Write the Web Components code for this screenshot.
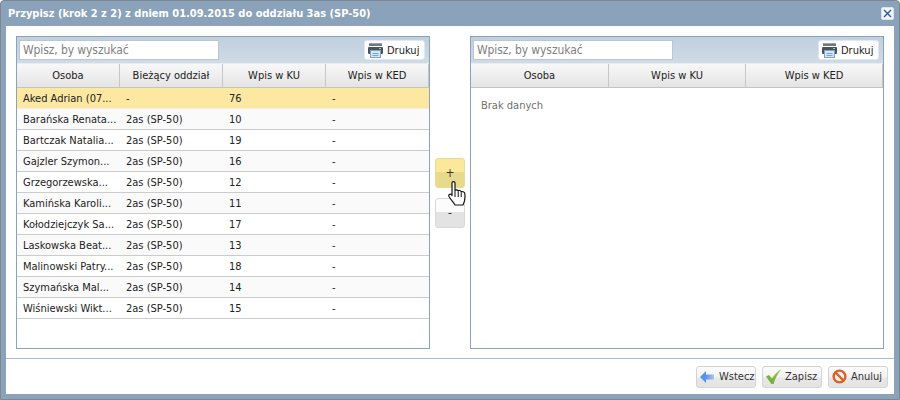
<!DOCTYPE html>
<html lang="pl">
<head>
<meta charset="utf-8">
<title>Przypisz</title>
<style>
    html, body { margin: 0; padding: 0; }
    body { width: 900px; height: 400px; overflow: hidden; font: 11px "DejaVu Sans", sans-serif; font-stretch: condensed; color: #222; }
</style>
</head>
<body>
<assign-dialog title-text="Przypisz (krok 2 z 2) z dniem 01.09.2015 do oddziału 3as (SP-50)"></assign-dialog>

<script>
const ICONS = {
    print: `<svg width="15" height="15" viewBox="0 0 15 15">
        <rect x="1" y="0" width="13" height="1" fill="#9aa2aa"/>
        <rect x="1" y="1" width="13" height="2" fill="#6d7780"/>
        <rect x="0" y="4" width="15" height="7" rx="1" fill="#49535c"/>
        <rect x="11" y="5" width="2" height="1" fill="#8fd0a0"/>
        <rect x="2.500" y="7.500" width="10" height="7" fill="#d6e6f5" stroke="#7fa3c8"/>
        <path d="M4.500 10.500h6M4.500 12.500h6" stroke="#7fa3c8"/>
    </svg>`,
    back: `<svg width="14" height="12" viewBox="0 0 14 12">
        <defs><linearGradient id="arrow"><stop offset="0.4" stop-color="#5a92e8"/><stop offset="1" stop-color="#a9c6ec"/></linearGradient></defs>
        <path d="M0 6 6 0v3.500h8v5H6V12z" fill="url(#arrow)"/>
    </svg>`,
    check: `<svg width="16" height="15" viewBox="0 0 16 15">
        <defs><linearGradient id="tick" x1="0" y1="1" x2="1" y2="0"><stop offset="0" stop-color="#6aa52c"/><stop offset="1" stop-color="#a6cf58"/></linearGradient></defs>
        <path d="M0 7.500 3 6 6 9.500C8 6 11 2.500 15.500 0 12 4.500 9 9.500 7.500 15H5.500z" fill="url(#tick)"/>
    </svg>`,
    cancel: `<svg width="15" height="15" viewBox="0 0 15 15">
        <circle cx="7.500" cy="7.500" r="5.900" fill="#fbeee6" stroke="#d9622b" stroke-width="2.400"/>
        <path d="M3.500 3.500 11.500 11.500" stroke="#d9622b" stroke-width="2.400"/>
    </svg>`
};

class DialogCloseButton extends HTMLElement {
    constructor() {
        super();
        this.attachShadow({ mode: 'open' });
    }

    connectedCallback() {
        this.shadowRoot.innerHTML = `
            <style>
                :host { display: block; box-sizing: border-box; width: 13px; height: 13px; background: #f1f6fb; border: 1px solid #d6e4f2; border-radius: 2px; }
                svg { display: block; }
            </style>
            <svg width="11" height="11" viewBox="0 0 11 11">
                <path d="M2 2 9 9M9 2 2 9" stroke="#2b5a90" stroke-width="1.400" fill="none"/>
            </svg>
        `;
    }
}

class SearchBox extends HTMLElement {
    constructor() {
        super();
        this.attachShadow({ mode: 'open' });
    }

    connectedCallback() {
        this.shadowRoot.innerHTML = `
            <style>
                :host { display: block; box-sizing: border-box; width: 200px; height: 20px; background: #fff; border: 1px solid #bcc6d0; color: #808080; font-size: 12px; letter-spacing: -.1px; line-height: 18px; padding-left: 3px; }
            </style>
            Wpisz, by wyszukać
        `;
    }
}

class PrintButton extends HTMLElement {
    constructor() {
        super();
        this.attachShadow({ mode: 'open' });
    }

    connectedCallback() {
        this.shadowRoot.innerHTML = `
            <style>
                :host { display: flex; align-items: center; gap: 4px; box-sizing: border-box; width: 61px; height: 20px; padding-left: 3px; background: #fff; border: 1px solid #e2e8ee; border-radius: 3px; color: #222; }
                svg { display: block; flex: none; }
            </style>
            ${ICONS.print}<span>Drukuj</span>
        `;
    }
}

class DataPanel extends HTMLElement {
    constructor() {
        super();
        this.attachShadow({ mode: 'open' });
    }

    connectedCallback() {
        const columns = JSON.parse(this.getAttribute('columns'));
        const rows = JSON.parse(this.getAttribute('rows') || '[]');
        const grid = `grid-template-columns: ${this.getAttribute('grid')};`;

        const head = columns.map(c => `<div class="th">${c}</div>`).join('');
        const body = rows.length
            ? rows.map((r, i) => `<div class="tr ${i === 0 ? 'selected' : ''}" style="${grid}">
                    ${r.map(c => `<div class="td">${c}</div>`).join('')}
                </div>`).join('')
            : `<div class="empty">Brak danych</div>`;

        this.shadowRoot.innerHTML = `
            <style>
                :host { display: flex; flex-direction: column; box-sizing: border-box; width: 414px; height: 313px; border: 1px solid #8aa3bb; background: #fff; }
                .toolbar { display: flex; justify-content: space-between; align-items: center; box-sizing: border-box; height: 27px; padding: 0 4px 0 2px; background: linear-gradient(#c0d0df, #cfdbe6); border-bottom: 1px solid #e8edf2; flex: none; }
                .head { display: grid; height: 24px; box-sizing: border-box; flex: none; background: linear-gradient(#f8f8f8, #e4e4e4); border-bottom: 1px solid #c4c4c4; }
                .th { display: flex; align-items: center; justify-content: center; border-right: 1px solid #c4c8cc; color: #222; }
                .tr { display: grid; height: 21px; box-sizing: border-box; border-bottom: 1px solid #ccc; background: #fff; }
                .tr:nth-child(even) { background: #fafafa; }
                .tr.selected { background: #fde8a2; border-bottom-color: #f4efdc; }
                .td { padding-left: 6px; line-height: 21px; white-space: nowrap; overflow: hidden; color: #222; }
                .empty { padding: 11px 10px; color: #707070; line-height: 14px; }
            </style>
            <div class="toolbar"><search-box></search-box><print-button></print-button></div>
            <div class="head" style="${grid}">${head}</div>
            <div class="body">${body}</div>
        `;
    }
}

class MoveButton extends HTMLElement {
    constructor() {
        super();
        this.attachShadow({ mode: 'open' });
    }

    connectedCallback() {
        const hot = this.hasAttribute('hot');
        this.shadowRoot.innerHTML = `
            <style>
                :host { display: flex; align-items: center; justify-content: center; box-sizing: border-box; width: 30px; height: 30px; border-radius: 3px; color: #333; font-size: 12px;
                    border: 1px solid ${hot ? '#e8dc90' : '#d8d8d8'};
                    background: ${hot ? 'linear-gradient(#fde79b 0 45%, #e8da8c 45% 100%)' : 'linear-gradient(#fcfcfc 0 45%, #e3e3e3 45% 100%)'}; }
            </style>
            <slot></slot>
        `;
    }
}

class FooterButton extends HTMLElement {
    constructor() {
        super();
        this.attachShadow({ mode: 'open' });
    }

    connectedCallback() {
        const icon = ICONS[this.getAttribute('icon')];
        this.shadowRoot.innerHTML = `
            <style>
                :host { display: flex; align-items: center; gap: 3px; box-sizing: border-box; width: 60px; height: 22px; padding-left: 3px; border: 1px solid #d4d4d4; border-radius: 3px; background: linear-gradient(#fcfcfc, #f3f3f3 50%, #e7e7e7 55%, #e4e4e4); color: #333; }
                .icon { display: flex; align-items: center; width: 16px; flex: none; }
                svg { display: block; }
            </style>
            <span class="icon">${icon}</span><slot></slot>
        `;
    }
}

class AssignDialog extends HTMLElement {
    constructor() {
        super();
        this.attachShadow({ mode: 'open' });
    }

    connectedCallback() {
        const leftRows = [
            ['Aked Adrian (07...', '-', '76', '-'],
            ['Barańska Renata...', '2as (SP-50)', '10', '-'],
            ['Bartczak Natalia...', '2as (SP-50)', '19', '-'],
            ['Gajzler Szymon...', '2as (SP-50)', '16', '-'],
            ['Grzegorzewska...', '2as (SP-50)', '12', '-'],
            ['Kamińska Karoli...', '2as (SP-50)', '11', '-'],
            ['Kołodziejczyk Sa...', '2as (SP-50)', '17', '-'],
            ['Laskowska Beat...', '2as (SP-50)', '13', '-'],
            ['Malinowski Patry...', '2as (SP-50)', '18', '-'],
            ['Szymańska Mal...', '2as (SP-50)', '14', '-'],
            ['Wiśniewski Wikt...', '2as (SP-50)', '15', '-']
        ];
        const attr = v => JSON.stringify(v).replace(/'/g, '&#39;');

        this.shadowRoot.innerHTML = `
            <style>
                :host { display: flex; flex-direction: column; box-sizing: border-box; width: 900px; height: 400px; background: #8aa3bb; border: 1px solid #7c8791; border-radius: 4px 4px 0 0; }
                .title { display: flex; align-items: center; justify-content: space-between; box-sizing: border-box; height: 25px; flex: none; padding: 0 5px 0 7px; color: #fff; font-weight: bold; font-size: 11px; }
                .content { flex: 1; display: flex; flex-direction: column; margin: 0 5px 5px 5px; background: #fff; }
                .main { display: flex; height: 333px; box-sizing: border-box; padding: 10px 9px 0 10px; border-bottom: 1px solid #a9bbcc; flex: none; }
                .moves { display: flex; flex-direction: column; gap: 10px; width: 40px; box-sizing: border-box; padding: 122px 0 0 5px; }
                .footer { flex: 1; display: flex; justify-content: flex-end; align-items: center; gap: 6px; padding-right: 6px; }
                .hand { position: absolute; left: 448px; top: 181px; }
            </style>
            <div class="title"><span>${this.getAttribute('title-text')}</span><dialog-close-button></dialog-close-button></div>
            <div class="content">
                <div class="main">
                    <data-panel grid="103px 103px 103px 1fr" columns='${attr(['Osoba', 'Bieżący oddział', 'Wpis w KU', 'Wpis w KED'])}' rows='${attr(leftRows)}'></data-panel>
                    <div class="moves"><move-button hot>+</move-button><move-button>-</move-button></div>
                    <data-panel grid="138px 137px 1fr" columns='${attr(['Osoba', 'Wpis w KU', 'Wpis w KED'])}'></data-panel>
                </div>
                <div class="footer">
                    <footer-button icon="back">Wstecz</footer-button>
                    <footer-button icon="check">Zapisz</footer-button>
                    <footer-button icon="cancel">Anuluj</footer-button>
                </div>
            </div>
            <svg class="hand" width="19" height="25" viewBox="0 0 19 25">
                <path d="M4 2C4 .2 7 .2 7 2V9.500C7.500 8.500 9.800 8.500 10.200 10 11 9 12.800 9.300 13.200 11 14 10.300 16.500 10.500 16.800 12.500 17.300 16 17 20 15 24H7C5.500 21 3 19 1 15.500 .2 14 2 12.500 3.200 13.500L4 14.500z" fill="#fff" stroke="#111" stroke-width="1.200" stroke-linejoin="round"/>
                <path d="M7 10V16M10.200 10.500V16M13.200 11.500V16" stroke="#111" stroke-width="1" fill="none"/>
            </svg>
        `;
    }
}

customElements.define('dialog-close-button', DialogCloseButton);
customElements.define('search-box', SearchBox);
customElements.define('print-button', PrintButton);
customElements.define('data-panel', DataPanel);
customElements.define('move-button', MoveButton);
customElements.define('footer-button', FooterButton);
customElements.define('assign-dialog', AssignDialog);
</script>
</body>
</html>
